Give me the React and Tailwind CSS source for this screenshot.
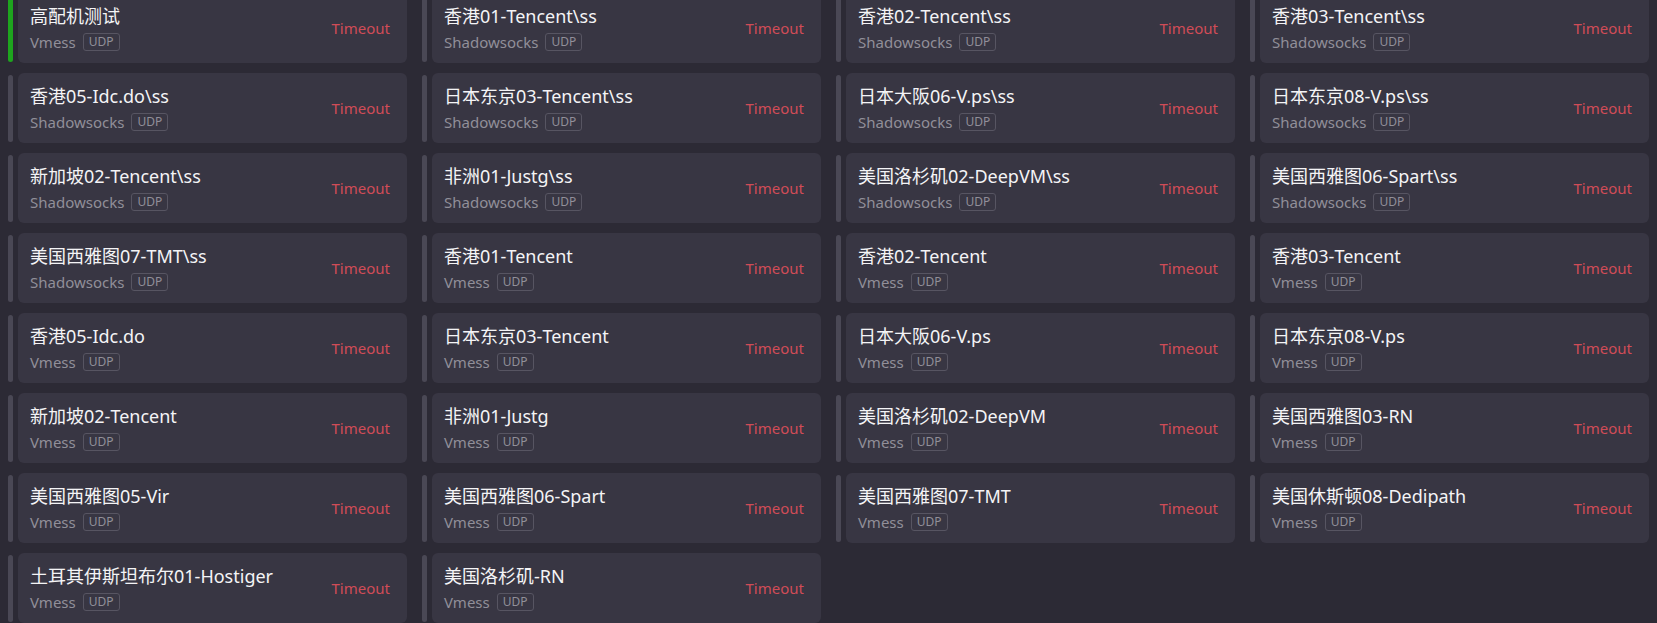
import React from "react";

const items = [
  ["高配机测试", "Vmess", true],
  ["香港01-Tencent\\ss", "Shadowsocks"],
  ["香港02-Tencent\\ss", "Shadowsocks"],
  ["香港03-Tencent\\ss", "Shadowsocks"],
  ["香港05-Idc.do\\ss", "Shadowsocks"],
  ["日本东京03-Tencent\\ss", "Shadowsocks"],
  ["日本大阪06-V.ps\\ss", "Shadowsocks"],
  ["日本东京08-V.ps\\ss", "Shadowsocks"],
  ["新加坡02-Tencent\\ss", "Shadowsocks"],
  ["非洲01-Justg\\ss", "Shadowsocks"],
  ["美国洛杉矶02-DeepVM\\ss", "Shadowsocks"],
  ["美国西雅图06-Spart\\ss", "Shadowsocks"],
  ["美国西雅图07-TMT\\ss", "Shadowsocks"],
  ["香港01-Tencent", "Vmess"],
  ["香港02-Tencent", "Vmess"],
  ["香港03-Tencent", "Vmess"],
  ["香港05-Idc.do", "Vmess"],
  ["日本东京03-Tencent", "Vmess"],
  ["日本大阪06-V.ps", "Vmess"],
  ["日本东京08-V.ps", "Vmess"],
  ["新加坡02-Tencent", "Vmess"],
  ["非洲01-Justg", "Vmess"],
  ["美国洛杉矶02-DeepVM", "Vmess"],
  ["美国西雅图03-RN", "Vmess"],
  ["美国西雅图05-Vir", "Vmess"],
  ["美国西雅图06-Spart", "Vmess"],
  ["美国西雅图07-TMT", "Vmess"],
  ["美国休斯顿08-Dedipath", "Vmess"],
  ["土耳其伊斯坦布尔01-Hostiger", "Vmess"],
  ["美国洛杉矶-RN", "Vmess"],
];

function Item({ name, type, active }) {
  return (
    <div className="flex h-[70px]">
      <div
        className={
          "w-[5px] mt-[2px] mb-[1px] rounded-full shrink-0 " +
          (active ? "bg-[#1ea51e]" : "bg-[#4a4855]")
        }
      />
      <div className="ml-[5px] flex-1 rounded-[6px] bg-[#383643] flex items-center pl-3 pr-[17px]">
        <div className="flex-1 min-w-0 self-stretch pt-[11px]">
          <div className="text-[18px] leading-[24px] text-[#f4f4f6] whitespace-nowrap">
            {name}
          </div>
          <div className="mt-[4px] flex items-center h-[20px]">
            <span className="text-[15px] text-[#918f99]">{type}</span>
            <span className="ml-[7px] h-[18px] px-[5px] flex items-center rounded-[3px] border border-[#575562] text-[12px] text-[#918f99] leading-none">
              UDP
            </span>
          </div>
        </div>
        <div className="text-[15px] text-[#d04c57]">Timeout</div>
      </div>
    </div>
  );
}

export default function App() {
  return (
    <div
      className="w-[1657px] h-[623px] overflow-hidden bg-[#2c2a35]"
      style={{ fontFamily: '"Noto Sans", "Noto Sans CJK SC", sans-serif' }}
    >
      <div className="-mt-[7px] pl-[8px] pr-[8px] grid grid-cols-4 gap-x-[15px] gap-y-[10px]">
        {items.map(([n, t, a], i) => (
          <Item key={i} name={n} type={t} active={a} />
        ))}
      </div>
    </div>
  );
}
